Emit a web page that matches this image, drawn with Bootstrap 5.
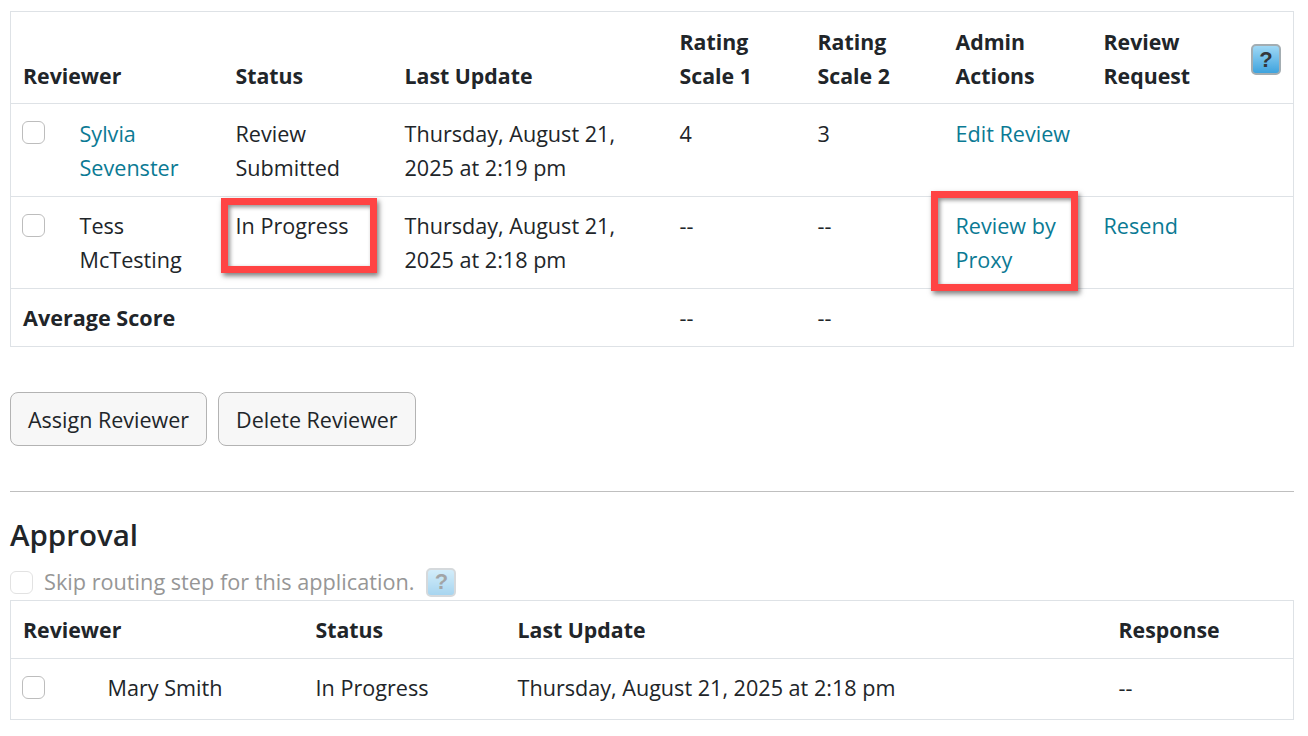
<!DOCTYPE html>
<html lang="en">
<head>
<meta charset="utf-8">
<title>Reviewers</title>
<link href="https://cdn.jsdelivr.net/npm/bootstrap@5.3.0/dist/css/bootstrap.min.css" rel="stylesheet">
<style>
html,body{height:736px;overflow:hidden}
body{font-family:"Open Sans","Noto Sans",sans-serif;font-size:21.6px;line-height:34px;color:#212529;background:#fff}
.page-wrap{position:relative;padding:11px 14px 0 10px}
.rev-table{table-layout:fixed;width:100%;margin:0;border:1px solid #dee2e6;--bs-table-color:#212529}
.rev-table th,.rev-table td{padding:12px;vertical-align:top;line-height:34px;border-color:#dee2e6;font-size:21.6px}
.rev-table thead th{vertical-align:bottom;font-weight:700;font-size:21.3px;border-bottom:1px solid #dee2e6}
.rev-table thead th.help-cell{vertical-align:top}
.rev-table tbody tr:last-child td{border-bottom:0}
.top-table thead th{padding-top:13px;padding-bottom:10px}
.top-table .row-one td{padding-top:13px;padding-bottom:11px}
.top-table .row-one .box-check{margin-top:4px}
.top-table .row-two td{padding-bottom:11px}
.top-table .row-three td{padding-bottom:11px}
.low-table thead th{padding-bottom:11px}
.low-table tbody td{padding-bottom:14px}
.rev-table a{color:#0b7a94;text-decoration:none}
.box-check{display:block;width:23px;height:23px;margin:5px 0 0 -1px;border:1px solid #bdbdbd;border-radius:6px;background:#fff;appearance:none}
.help-ico{display:flex;align-items:center;justify-content:center;width:30px;height:31px;border-radius:5px;border:2px solid #a3adb2;background:linear-gradient(#9fd8f5,#3ea3de);font-family:"Liberation Sans",sans-serif;font-weight:700;font-size:22px;line-height:1;color:#33373b}
.help-top{margin:19px 0 0 auto}
.help-faded{opacity:.45;margin-left:12px;height:29px}
.act-btn{font-size:21.5px;line-height:34px;padding:10px 17px 8px;color:#212529;background:#f7f7f7;border:1px solid #b3b3b3;border-radius:8px}
.act-btn:hover{background:#f0f0f0;border-color:#b3b3b3;color:#212529}
.btn-line{margin-top:45px;gap:11px}
.sep{margin:45px 0 0;border:0;border-top:1px solid #bfbfbf;opacity:1}
.sec-title{font-size:29.5px;line-height:36px;font-weight:600;margin:25px 0 0}
.skip-line{display:flex;align-items:center;color:#969696;font-size:21.7px;height:34px;margin-top:12px;margin-bottom:1px}
.skip-line .box-check{margin:0 11px 0 0;border-color:#e2e2e2}
.mark-box{position:absolute;border:7px solid #ff4444;box-shadow:2px 3px 5px rgba(0,0,0,.5),inset 2px 2px 4px rgba(0,0,0,.45);pointer-events:none}
.mark-a{left:221px;top:198px;width:156px;height:75px}
.mark-b{left:931px;top:191px;width:147px;height:100px}
</style>
</head>
<body>
<div class="page-wrap">
  <table class="table rev-table top-table">
    <colgroup>
      <col style="width:57px"><col style="width:156px"><col style="width:169px"><col style="width:275px"><col style="width:138px"><col style="width:138px"><col style="width:148px"><col style="width:136px"><col>
    </colgroup>
    <thead>
      <tr>
        <th colspan="2">Reviewer</th>
        <th>Status</th>
        <th>Last Update</th>
        <th>Rating Scale 1</th>
        <th>Rating Scale 2</th>
        <th>Admin Actions</th>
        <th>Review Request</th>
        <th class="help-cell"><span class="help-ico help-top">?</span></th>
      </tr>
    </thead>
    <tbody>
      <tr class="row-one">
        <td><input type="checkbox" class="box-check" aria-label="Select"></td>
        <td><a href="#">Sylvia Sevenster</a></td>
        <td>Review Submitted</td>
        <td>Thursday, August 21, 2025 at 2:19 pm</td>
        <td>4</td>
        <td>3</td>
        <td><a href="#">Edit Review</a></td>
        <td></td>
        <td></td>
      </tr>
      <tr class="row-two">
        <td><input type="checkbox" class="box-check" aria-label="Select"></td>
        <td>Tess McTesting</td>
        <td>In Progress</td>
        <td>Thursday, August 21, 2025 at 2:18 pm</td>
        <td>--</td>
        <td>--</td>
        <td><a href="#">Review by Proxy</a></td>
        <td><a href="#">Resend</a></td>
        <td></td>
      </tr>
      <tr class="row-three">
        <td colspan="4"><strong>Average Score</strong></td>
        <td>--</td>
        <td>--</td>
        <td></td>
        <td></td>
        <td></td>
      </tr>
    </tbody>
  </table>

  <div class="d-flex btn-line">
    <button type="button" class="btn act-btn">Assign Reviewer</button>
    <button type="button" class="btn act-btn">Delete Reviewer</button>
  </div>

  <hr class="sep">
  <h2 class="sec-title">Approval</h2>
  <div class="skip-line">
    <input type="checkbox" class="box-check" disabled aria-label="Skip">
    <span>Skip routing step for this application.</span>
    <span class="help-ico help-faded">?</span>
  </div>

  <table class="table rev-table low-table">
    <colgroup>
      <col style="width:85px"><col style="width:208px"><col style="width:202px"><col style="width:601px"><col>
    </colgroup>
    <thead>
      <tr><th colspan="2">Reviewer</th><th>Status</th><th>Last Update</th><th>Response</th></tr>
    </thead>
    <tbody>
      <tr>
        <td><input type="checkbox" class="box-check" aria-label="Select"></td>
        <td>Mary Smith</td>
        <td>In Progress</td>
        <td>Thursday, August 21, 2025 at 2:18 pm</td>
        <td>--</td>
      </tr>
    </tbody>
  </table>

  <div class="mark-box mark-a"></div>
  <div class="mark-box mark-b"></div>
</div>
<script src="https://cdn.jsdelivr.net/npm/bootstrap@5.3.0/dist/js/bootstrap.bundle.min.js"></script>
</body>
</html>
